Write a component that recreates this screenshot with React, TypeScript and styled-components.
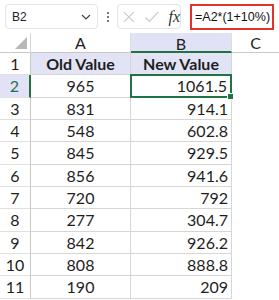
import { Fragment } from "react";
import styled, { createGlobalStyle, css } from "styled-components";

const GlobalStyle = createGlobalStyle`
  body {
    margin: 0;
    background: #fff;
    font-family: "Lato", "Liberation Sans", sans-serif;
  }
`;

const Page = styled.div`
  width: 279px;
  height: 300px;
  overflow: hidden;
  background: #fff;
`;

const Toolbar = styled.div`
  height: 33px;
  display: flex;
  align-items: center;
  padding: 0 5px;
  box-sizing: border-box;
`;

const NameBox = styled.div`
  width: 93px;
  height: 25px;
  box-sizing: border-box;
  border: 1px solid #e2e2f0;
  border-radius: 4px;
  display: flex;
  align-items: center;
  justify-content: space-between;
  padding: 0 6px;
  font-family: "Liberation Sans", sans-serif;
  font-size: 12px;
  color: #222;
`;

const Dots = styled.div`
  width: 19px;
  display: flex;
  flex-direction: column;
  align-items: center;
  gap: 2px;
  span {
    width: 2px;
    height: 2px;
    background: #777;
  }
`;

const FxBox = styled.div`
  width: 64px;
  height: 25px;
  box-sizing: border-box;
  border: 1px solid #e2e2f0;
  border-radius: 4px;
  display: flex;
  align-items: center;
  padding-left: 4px;
  gap: 8px;
`;

const Fx = styled.span`
  font-family: "Liberation Serif", serif;
  font-style: italic;
  font-size: 16px;
  color: #333;
  margin-left: 1px;
`;

const Formula = styled.div`
  margin-left: 9px;
  width: 84px;
  height: 26px;
  box-sizing: border-box;
  border: 2px solid #e4322b;
  display: flex;
  align-items: center;
  padding-left: 3px;
  font-family: "Liberation Sans", sans-serif;
  font-size: 12.5px;
  color: #111;
  white-space: nowrap;
`;

const Grid = styled.div`
  display: grid;
  grid-template-columns: 31px 100px 101px 1fr;
  grid-template-rows: 20px repeat(11, 22.33px);
  font-size: 16px;
  color: #1e1e1e;
`;

const Corner = styled.div`
  position: relative;
  border-right: 1px solid #d6d6d6;
  border-bottom: 1px solid #c8c8c8;
  &::after {
    content: "";
    position: absolute;
    right: 3px;
    bottom: 3px;
    border-left: 12px solid transparent;
    border-bottom: 12px solid #b8b8b8;
  }
`;

const ColHead = styled.div<{ $selected?: boolean; $plain?: boolean }>`
  display: flex;
  align-items: center;
  justify-content: center;
  font-size: 16px;
  border-right: 1px solid #dedede;
  border-bottom: 1px solid #c8c8c8;
  box-sizing: border-box;
  ${(p) =>
    p.$selected &&
    css`
      background: #e2e2f7;
      border-bottom: 2px solid #217346;
      padding-top: 2px;
    `}
  ${(p) =>
    p.$plain &&
    css`
      border-right: none;
    `}
`;

const RowHead = styled.div<{ $selected?: boolean }>`
  display: flex;
  align-items: center;
  justify-content: center;
  font-size: 16px;
  border-right: 1px solid #c8c8c8;
  border-bottom: 1px solid #e0e0e0;
  box-sizing: border-box;
  ${(p) =>
    p.$selected &&
    css`
      background: #e2e2f7;
      border-right: 2px solid #217346;
      color: #217346;
    `}
`;

const Cell = styled.div<{ $align?: "center" | "right"; $title?: boolean }>`
  display: flex;
  align-items: center;
  justify-content: ${(p) => (p.$align === "right" ? "flex-end" : "center")};
  padding-right: ${(p) => (p.$align === "right" ? "3px" : "0")};
  border-right: 1px solid #d6d6d6;
  border-bottom: 1px solid #d6d6d6;
  box-sizing: border-box;
  ${(p) =>
    p.$title &&
    css`
      background: #e2e4f6;
      font-weight: 700;
      justify-content: center;
      padding-right: 0;
    `}
`;

const ActiveCell = styled(Cell)`
  position: relative;
  border: 2px solid #217346;
  margin: -1px 0 0 -1px;
  &::after {
    content: "";
    position: absolute;
    right: -4px;
    bottom: -4px;
    width: 5px;
    height: 5px;
    background: #217346;
    border: 1px solid #fff;
  }
`;

const Blank = styled.div``;

const rows: [number, string][] = [
  [965, "1061.5"],
  [831, "914.1"],
  [548, "602.8"],
  [845, "929.5"],
  [856, "941.6"],
  [720, "792"],
  [277, "304.7"],
  [842, "926.2"],
  [808, "888.8"],
  [190, "209"],
];

export default function App() {
  return (
    <Page>
      <GlobalStyle />
      <Toolbar>
        <NameBox>
          <span>B2</span>
          <svg width="10" height="6" viewBox="0 0 10 6" fill="none">
            <path d="M1 1l4 4 4-4" stroke="#444" strokeWidth="1.2" />
          </svg>
        </NameBox>
        <Dots>
          <span />
          <span />
          <span />
        </Dots>
        <FxBox>
          <svg width="14" height="14" viewBox="0 0 14 14" fill="none">
            <path d="M2 2l10 10M12 2L2 12" stroke="#c9c9c9" strokeWidth="1.2" />
          </svg>
          <svg width="16" height="14" viewBox="0 0 16 14" fill="none">
            <path d="M1.5 7.5l4 4L14.5 2" stroke="#c9c9c9" strokeWidth="1.2" />
          </svg>
          <Fx>fx</Fx>
        </FxBox>
        <Formula>=A2*(1+10%)</Formula>
      </Toolbar>
      <Grid>
        <Corner />
        <ColHead>A</ColHead>
        <ColHead $selected>B</ColHead>
        <ColHead $plain>C</ColHead>

        <RowHead>1</RowHead>
        <Cell $title>Old Value</Cell>
        <Cell $title>New Value</Cell>
        <Blank />

        {rows.map(([a, b], i) => (
          <Fragment key={i}>
            <RowHead $selected={i === 0}>{i + 2}</RowHead>
            <Cell>{a}</Cell>
            {i === 0 ? (
              <ActiveCell $align="right">{b}</ActiveCell>
            ) : (
              <Cell $align="right">{b}</Cell>
            )}
            <Blank />
          </Fragment>
        ))}
      </Grid>
    </Page>
  );
}
